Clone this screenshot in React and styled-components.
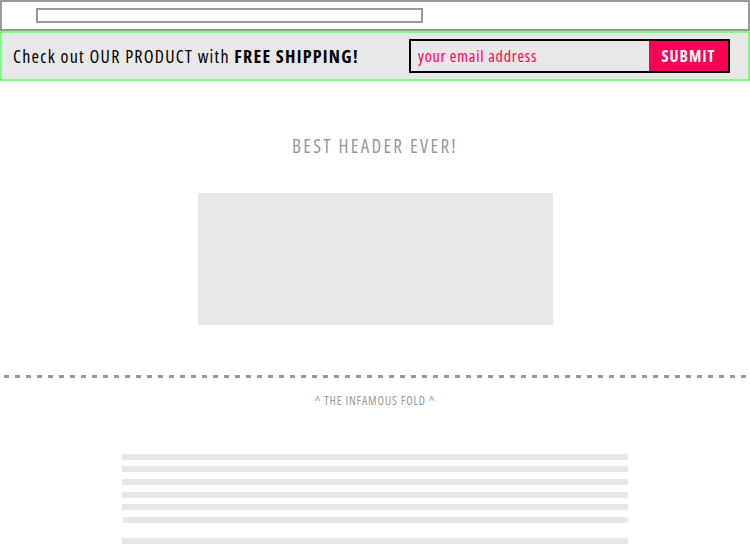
import styled, { createGlobalStyle } from 'styled-components';

const GlobalStyle = createGlobalStyle`
  body {
    margin: 0;
    background: #fff;
    font-family: 'Open Sans', sans-serif;
    font-stretch: 75%;
  }
`;

const TopBar = styled.div`
  height: 27px;
  border: 2px solid #999;
  display: flex;
  align-items: center;
  padding-left: 34px;
`;

const UrlBox = styled.div`
  width: 383px;
  height: 11px;
  border: 2px solid #999;
`;

const PromoBar = styled.div`
  height: 46px;
  border: 2px solid #80ff80;
  background: #e8e8e8;
  display: flex;
  align-items: center;
  justify-content: space-between;
  padding: 0 18px 0 11px;
`;

const PromoText = styled.p`
  margin: 0;
  font-size: 18px;
  letter-spacing: 1.25px;
  white-space: nowrap;
  color: #000;
  b {
    font-weight: bold;
  }
`;

const SignupForm = styled.form`
  display: flex;
  width: 317px;
  height: 30px;
  border: 2px solid #000;
  background: #e8e8e8;
`;

const EmailInput = styled.input`
  flex: 1;
  min-width: 0;
  border: none;
  background: transparent;
  padding: 0 7px;
  font-family: inherit;
  font-stretch: inherit;
  font-size: 16px;
  letter-spacing: 0.8px;
  color: #ff0055;
  outline: none;
  &::placeholder {
    color: #ff0055;
  }
`;

const SubmitButton = styled.button`
  width: 79px;
  border: none;
  background: #ff0055;
  color: #fff;
  font-family: inherit;
  font-stretch: inherit;
  font-weight: bold;
  font-size: 16px;
  letter-spacing: 1px;
  cursor: pointer;
`;

const Hero = styled.section`
  display: flex;
  flex-direction: column;
  align-items: center;
  padding-top: 53px;
`;

const Heading = styled.h1`
  margin: 0;
  font-size: 19px;
  font-weight: normal;
  letter-spacing: 2.3px;
  color: #999;
  line-height: 24px;
`;

const Placeholder = styled.div`
  width: 355px;
  height: 132px;
  margin-top: 35px;
  background: #e8e8e8;
`;

const Fold = styled.div`
  margin: 50px 0 0 4px;
  height: 3px;
  background: repeating-linear-gradient(to right, #999 0 5px, transparent 5px 11px);
`;

const FoldLabel = styled.p`
  margin: 16px 0 0;
  text-align: center;
  font-size: 12px;
  line-height: 14px;
  color: #999;
  letter-spacing: 0.85px;
`;

const TextBlock = styled.div`
  width: 506px;
  margin: 46px auto 0;
  display: flex;
  flex-direction: column;
`;

const TextLine = styled.div`
  height: 6px;
  background: #e8e8e8;
  margin-top: ${(props) => props.gap}px;
`;

const lineGaps = [0, 6, 7, 7, 6, 7, 15];

function App() {
  return (
    <>
      <GlobalStyle />
      <TopBar>
        <UrlBox />
      </TopBar>
      <PromoBar>
        <PromoText>
          Check out OUR PRODUCT with <b>FREE SHIPPING!</b>
        </PromoText>
        <SignupForm onSubmit={(e) => e.preventDefault()}>
          <EmailInput placeholder='your email address' />
          <SubmitButton>SUBMIT</SubmitButton>
        </SignupForm>
      </PromoBar>
      <Hero>
        <Heading>BEST HEADER EVER!</Heading>
        <Placeholder />
      </Hero>
      <Fold />
      <FoldLabel>^ THE INFAMOUS FOLD ^</FoldLabel>
      <TextBlock>
        {lineGaps.map((gap, i) => (
          <TextLine key={i} gap={gap} />
        ))}
      </TextBlock>
    </>
  );
}

export default App;
